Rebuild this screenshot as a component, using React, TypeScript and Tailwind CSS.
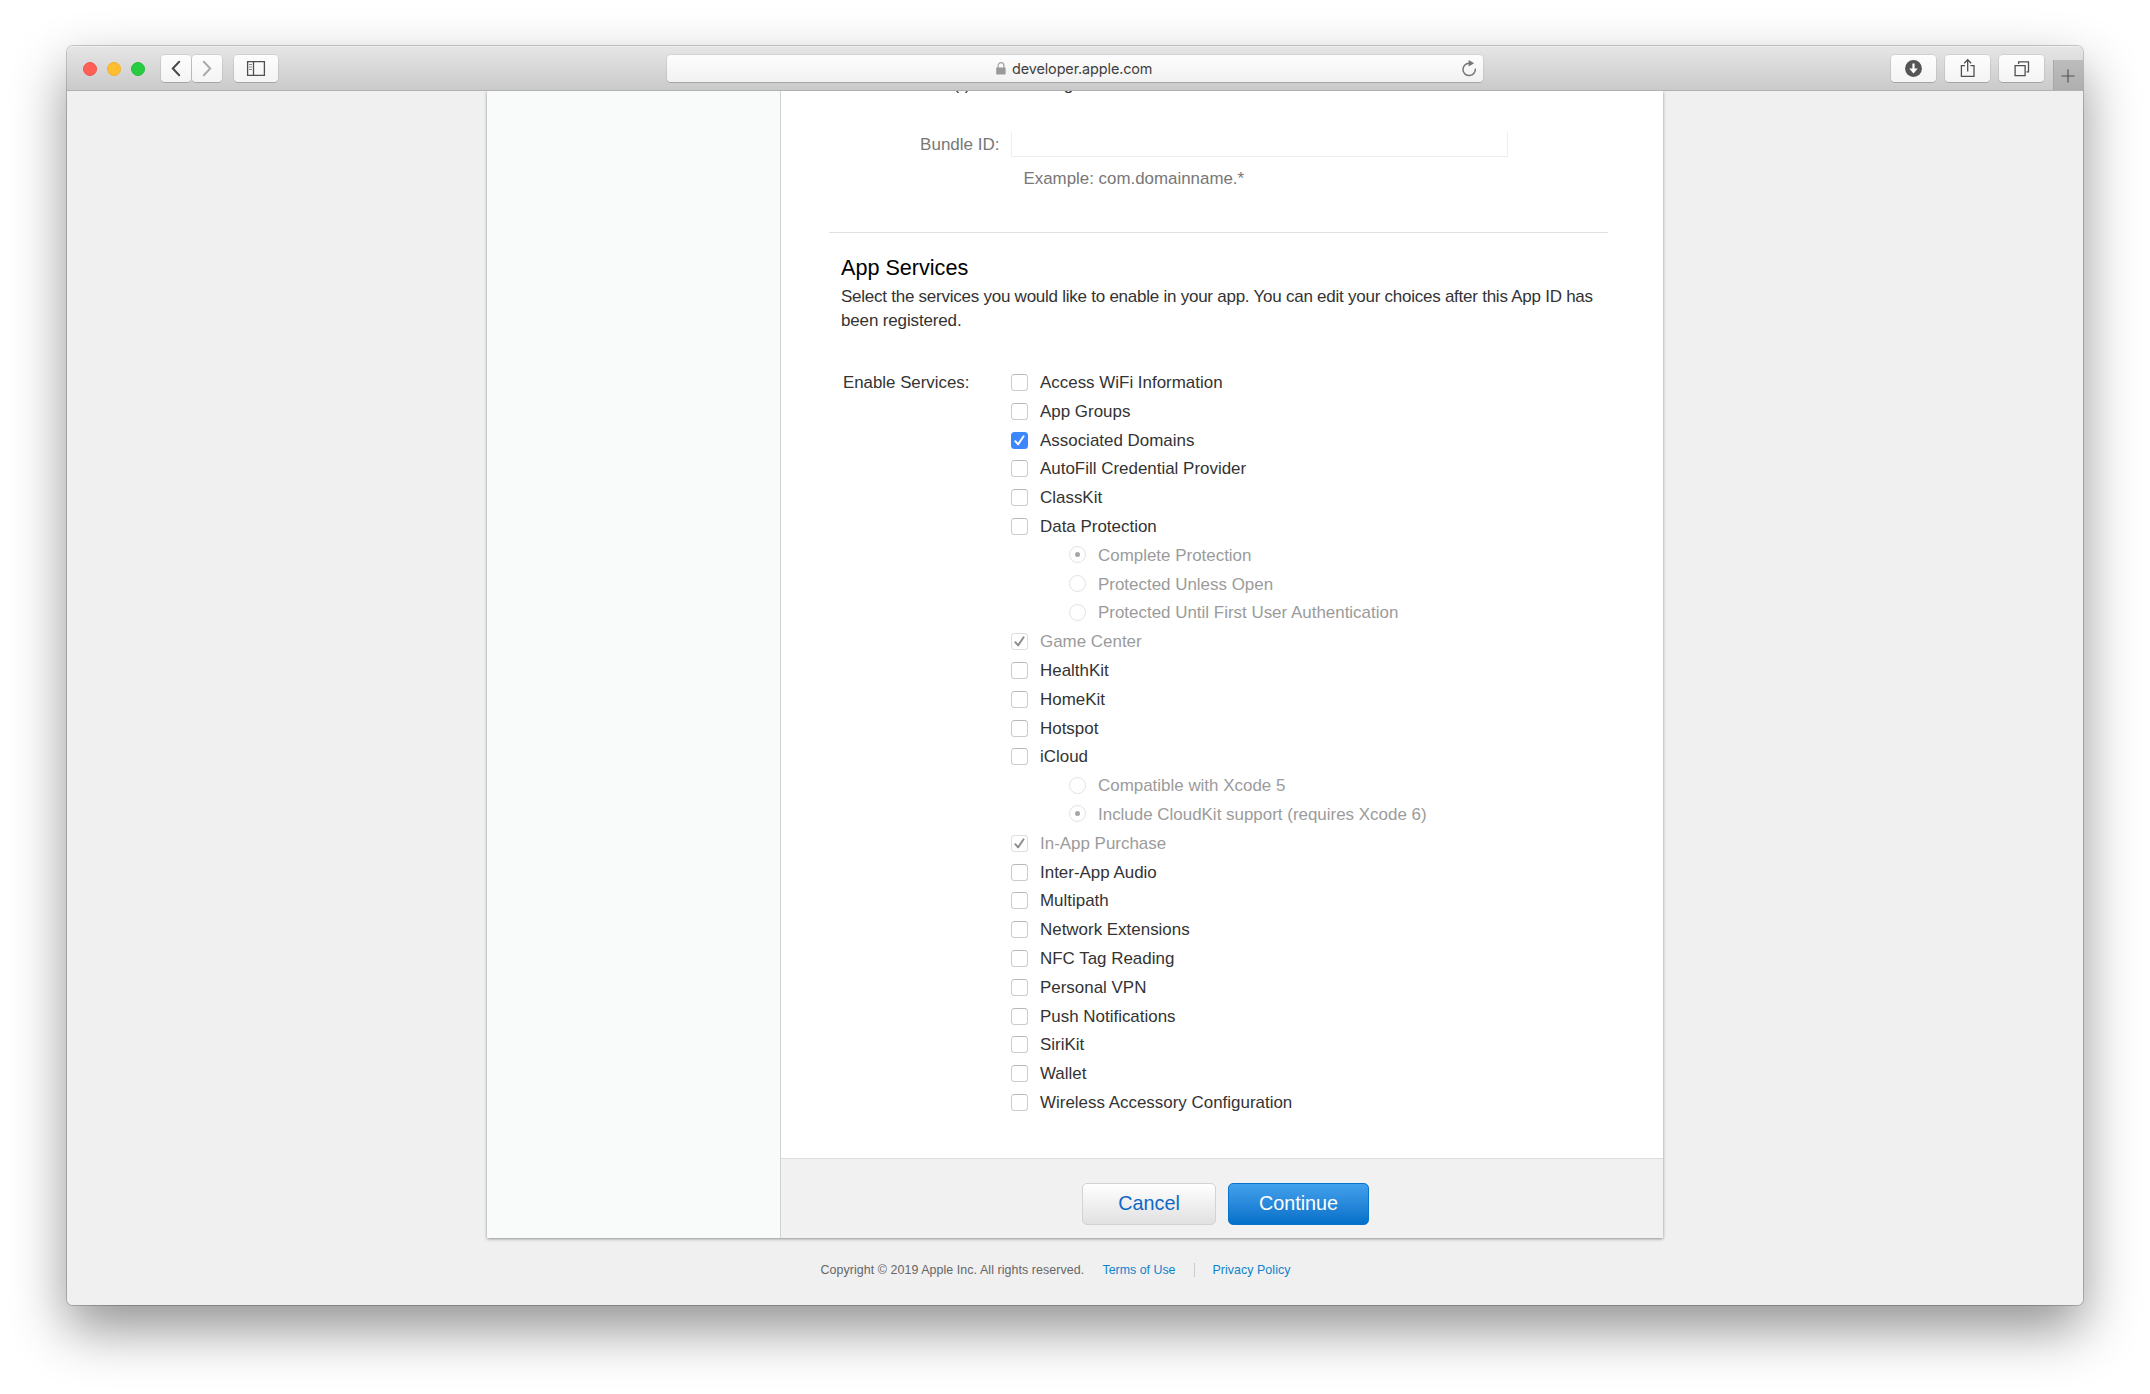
import type { ReactNode } from "react";

type Row = {
  label: string;
  checked?: boolean;
  disabled?: boolean;
  radio?: boolean;
};

const services: Row[] = [
  { label: "Access WiFi Information" },
  { label: "App Groups" },
  { label: "Associated Domains", checked: true },
  { label: "AutoFill Credential Provider" },
  { label: "ClassKit" },
  { label: "Data Protection" },
  { label: "Complete Protection", radio: true, checked: true, disabled: true },
  { label: "Protected Unless Open", radio: true, disabled: true },
  { label: "Protected Until First User Authentication", radio: true, disabled: true },
  { label: "Game Center", checked: true, disabled: true },
  { label: "HealthKit" },
  { label: "HomeKit" },
  { label: "Hotspot" },
  { label: "iCloud" },
  { label: "Compatible with Xcode 5", radio: true, disabled: true },
  { label: "Include CloudKit support (requires Xcode 6)", radio: true, checked: true, disabled: true },
  { label: "In-App Purchase", checked: true, disabled: true },
  { label: "Inter-App Audio" },
  { label: "Multipath" },
  { label: "Network Extensions" },
  { label: "NFC Tag Reading" },
  { label: "Personal VPN" },
  { label: "Push Notifications" },
  { label: "SiriKit" },
  { label: "Wallet" },
  { label: "Wireless Accessory Configuration" },
];

function Check({ className }: { className: string }) {
  return (
    <svg viewBox="0 0 17 17" className={`size-[17px] fill-none ${className}`}>
      <path d="M4.3 9.2 7.1 12.4 12.6 4.2" strokeWidth="1.9" stroke="currentColor" strokeLinecap="round" strokeLinejoin="round" />
    </svg>
  );
}

function Checkbox({ checked, disabled }: Row) {
  if (checked && !disabled) {
    return (
      <span className="size-[17px] shrink-0 rounded-[3.5px] bg-[#3b87fb]">
        <Check className="text-white" />
      </span>
    );
  }
  if (disabled) {
    return (
      <span className="size-[17px] shrink-0 rounded-[3.5px] bg-white shadow-[inset_0_0_0_1px_#dfdfdf]">
        {checked && <Check className="text-[#8c8c8c]" />}
      </span>
    );
  }
  return <span className="size-[17px] shrink-0 rounded-[3.5px] border border-[#cccccc] border-t-[#bababa] bg-white" />;
}

function Radio({ checked }: Row) {
  return (
    <span className="flex size-[17px] shrink-0 items-center justify-center rounded-full border border-[#e2e2e2] bg-white">
      {checked && <span className="size-[5px] rounded-full bg-[#a6a6a6]" />}
    </span>
  );
}

function ToolButton({ children, className }: { children: ReactNode; className: string }) {
  return (
    <button
      className={`flex h-[27px] shrink-0 items-center justify-center rounded-[4px] bg-gradient-to-b from-[#fdfdfd] to-[#f4f4f4] shadow-[0_0_0_0.5px_rgba(0,0,0,0.14),0_1px_0_rgba(0,0,0,0.14)] ${className}`}
    >
      {children}
    </button>
  );
}

function Toolbar() {
  return (
    <div className="flex h-[45px] shrink-0 items-start border-b border-[#b1b1b1] bg-gradient-to-b from-[#e6e6e6] to-[#cacaca] pt-[9px] shadow-[inset_0_1px_0_#efefef]">
      <div className="flex h-[27px] w-[600px] shrink-0 items-center pl-4">
        <span className="mr-[10px] size-[14px] rounded-full border border-[#f0554e] bg-[#ff5f57]" />
        <span className="mr-[10px] size-[14px] rounded-full border border-[#f2b029] bg-[#ffbe2f]" />
        <span className="mr-[16px] size-[14px] rounded-full border border-[#22bc37] bg-[#28cc41]" />
        <ToolButton className="w-[30px]">
          <svg viewBox="0 0 30 27" className="h-[27px] w-[30px] fill-none">
            <path d="M18.2 6.8 11.8 13.5 18.2 20.2" stroke="#4a4a4a" strokeWidth="2" strokeLinecap="round" />
          </svg>
        </ToolButton>
        <ToolButton className="ml-px w-[30px]">
          <svg viewBox="0 0 30 27" className="h-[27px] w-[30px] fill-none">
            <path d="M11.8 6.8 18.2 13.5 11.8 20.2" stroke="#aaaaaa" strokeWidth="2" strokeLinecap="round" />
          </svg>
        </ToolButton>
        <ToolButton className="ml-[12px] w-[44px]">
          <svg viewBox="0 0 44 27" className="h-[27px] w-[44px] fill-none">
            <path d="M13.6 6.6h16.8v13.8H13.6zM19.5 6.6v13.8" stroke="#4f4f4f" strokeWidth="1.3" />
            <path d="M15 9.5h3M15 12h3M15 14.5h3" stroke="#8a8a8a" strokeWidth="1" />
          </svg>
        </ToolButton>
      </div>

      <div className="flex h-[27px] w-[816px] shrink-0 items-center rounded-[4px] bg-gradient-to-b from-[#fdfdfd] to-[#f2f2f2] shadow-[0_0_0_0.5px_rgba(0,0,0,0.12),0_1px_0_rgba(0,0,0,0.14)]">
        <svg viewBox="0 0 10 13" className="ml-[329px] h-[13px] w-[10px] fill-none">
          <path d="M2.1 6V3.6a2.9 2.9 0 0 1 5.8 0V6" stroke="#a0a0a0" strokeWidth="1.2" />
          <rect x="0.2" y="5.4" width="9.4" height="7.2" rx="0.8" fill="#9a9a9a" />
        </svg>
        <span className="ml-[6px] font-['Inter',sans-serif] text-[14.4px] leading-[27px] tracking-[-0.1px] text-[#404040]">developer.apple.com</span>
        <svg viewBox="0 0 16 18" className="mr-[6px] mb-px ml-auto h-[18px] w-[16px] fill-none">
          <path d="M14.3 9.6A6.2 6.2 0 1 1 8.1 4.2" stroke="#757575" strokeWidth="1.5" />
          <path d="M7.6 1 13.2 4.2 7.6 7.4z" fill="#757575" />
        </svg>
      </div>

      <div className="ml-auto flex items-start">
        <ToolButton className="w-[45px]">
          <svg viewBox="0 0 45 27" className="h-[27px] w-[45px] fill-none">
            <circle cx="22.5" cy="13.5" r="8.4" fill="#555555" />
            <path d="M22.5 8.6v6.4" stroke="white" strokeWidth="2.2" />
            <path d="M18.2 13.4h8.6L22.5 18.5z" fill="white" />
          </svg>
        </ToolButton>
        <ToolButton className="ml-[9px] w-[45px]">
          <svg viewBox="0 0 45 27" className="h-[27px] w-[45px] fill-none">
            <path d="M20 10.6h-3.6v10.8h12.6V10.6h-3.6" stroke="#4f4f4f" strokeWidth="1.3" />
            <path d="M22.7 16.6V5M19.2 8.3l3.5-3.6 3.5 3.6" stroke="#4f4f4f" strokeWidth="1.3" />
          </svg>
        </ToolButton>
        <ToolButton className="ml-[9px] w-[45px]">
          <svg viewBox="0 0 45 27" className="h-[27px] w-[45px] fill-none">
            <path d="M16.1 10.6h10v10h-10z" stroke="#4f4f4f" strokeWidth="1.3" />
            <path d="M19.6 9V6.9h9.9v9.9h-2" stroke="#4f4f4f" strokeWidth="1.3" />
          </svg>
        </ToolButton>
        <div className="mt-[5px] ml-[9.5px] flex h-[30px] w-[30px] items-center justify-center border-l border-[#a8a8a8] bg-gradient-to-b from-[#bcbcbc] to-[#afafaf]">
          <svg viewBox="0 0 14 14" className="mt-[2px] mr-[2px] size-[14px]">
            <path d="M7 0.4v13.2M0.4 7h13.2" stroke="#555555" strokeWidth="1.2" />
          </svg>
        </div>
      </div>
    </div>
  );
}

function ServiceRow(row: Row) {
  return (
    <li className={`flex h-[28.8px] items-center ${row.radio ? "pl-[58px]" : ""} ${row.disabled ? "text-[#9b9b9b]" : "text-[#333333]"}`}>
      <span className={`flex ${row.radio ? "mb-[2px]" : "mb-px"}`}>{row.radio ? <Radio {...row} /> : <Checkbox {...row} />}</span>
      <span className="mt-px ml-3 leading-[28.8px] whitespace-nowrap">{row.label}</span>
    </li>
  );
}

export default function App() {
  return (
    <div className="h-[1394px] w-[2150px] overflow-hidden bg-white pt-[46px] pl-[67px] font-['Liberation_Sans',Arial,sans-serif]">
      <div className="h-[1259px] w-[2016px] rounded-[6px] shadow-[0_0_0_1px_rgba(0,0,0,0.2),0_24px_54px_rgba(0,0,0,0.43)]">
        <div className="flex h-full flex-col overflow-hidden rounded-[6px] bg-[#f0f0f0]">
          <Toolbar />

          <div className="flex-1 overflow-hidden pl-[420px]">
            <div className="flex h-[1147px] w-[1176px] bg-white shadow-[0_1px_3px_rgba(0,0,0,0.4)]">
              <aside className="w-[294px] shrink-0 border-r border-[#cfd2d2] bg-[#f9fbfa]" />
              <main className="flex flex-1 flex-col text-[17px]">
                <div className="-mt-[18px] pl-[50px] leading-6 tracking-[-0.44px] whitespace-nowrap text-[#333333]">
                  enter an asterisk (*) as the last digit in the Bundle ID field.
                </div>

                <div className="mt-[35px] flex text-[#777777]">
                  <label className="w-[218.5px] pt-px text-right leading-6">Bundle ID:</label>
                  <div className="ml-[11.5px] h-[25px] w-[497px] border border-t-0 border-[#eeeeee]" />
                </div>
                <p className="mt-[10px] pl-[242.5px] text-[16.9px] leading-6 text-[#777777]">Example: com.domainname.*</p>

                <hr className="mt-[41px] mr-[55px] ml-[48px] border-[#e0e0e0]" />

                <h3 className="mt-[21px] ml-[60px] text-[21.6px] leading-7 text-black">App Services</h3>
                <p className="mt-[3px] ml-[60px] leading-6 whitespace-nowrap text-[#333333]">
                  <span className="block tracking-[-0.247px]">
                    Select the services you would like to enable in your app. You can edit your choices after this App ID has
                  </span>
                  <span className="block tracking-[-0.15px]">been registered.</span>
                </p>

                <div className="mt-[35.6px] flex text-[16.95px]">
                  <span className="mt-[0.5px] w-[230px] pl-[62px] text-[16.85px] leading-[28.8px] text-[#333333]">Enable Services:</span>
                  <ul>
                    {services.map((s) => (
                      <ServiceRow key={s.label} {...s} />
                    ))}
                  </ul>
                </div>

                <div className="mt-auto flex h-[80px] border-t border-[#dedede] bg-[#f1f1f1] pt-6 pl-[301px]">
                  <button className="h-[42px] w-[134px] rounded-[5px] border border-[#d3d3d3] bg-gradient-to-b from-white to-[#e1e1e1] pb-px text-[19.8px] leading-none text-[#1068c5]">
                    Cancel
                  </button>
                  <button className="ml-3 h-[42px] w-[141px] rounded-[5px] border border-[#0873c9] bg-gradient-to-b from-[#42a1ec] to-[#0070c9] text-[19.8px] leading-none text-white">
                    Continue
                  </button>
                </div>
              </main>
            </div>

            <footer className="mt-[22px] flex h-5 items-center pl-[333.5px] text-[12.4px] whitespace-nowrap">
              <span className="w-[282px] tracking-[0.08px] text-[#666666]">Copyright © 2019 Apple Inc. All rights reserved.</span>
              <a className="w-[91.5px] text-[#0f83cc]">Terms of Use</a>
              <span className="h-[14px] w-px bg-[#cccccc]" />
              <a className="ml-[17.5px] tracking-[0.06px] text-[#0f83cc]">Privacy Policy</a>
            </footer>
          </div>
        </div>
      </div>
    </div>
  );
}
